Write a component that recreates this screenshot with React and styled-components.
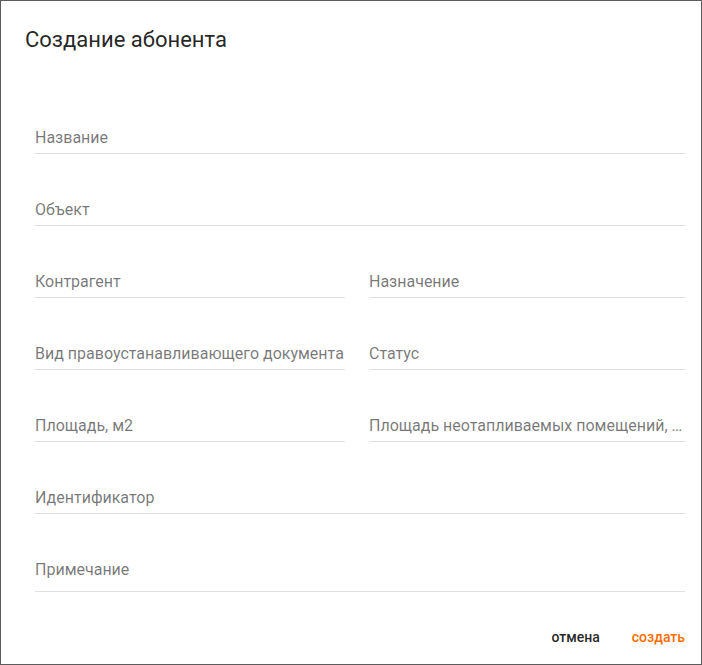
import React from 'react';
import styled, { createGlobalStyle } from 'styled-components';

const GlobalStyle = createGlobalStyle`
  html, body {
    margin: 0;
    padding: 0;
    background: #ffffff;
  }
  body {
    font-family: Roboto, "Noto Sans", Arial, sans-serif;
  }
`;

const Dialog = styled.div`
  box-sizing: border-box;
  width: 702px;
  height: 665px;
  border: 1px solid #5c5c5c;
  background: #ffffff;
  display: flex;
  flex-direction: column;
`;

const Title = styled.h2`
  margin: 0;
  padding: 23px 24px 26px;
  font-size: 22px;
  line-height: 32px;
  font-weight: 400;
  color: rgba(0, 0, 0, 0.87);
`;

const Form = styled.div`
  display: flex;
  flex-direction: column;
  padding: 0 16px 0 34px;
`;

const Row = styled.div`
  display: grid;
  grid-template-columns: 310fr 316fr;
  column-gap: 24px;
`;

const Field = styled.div`
  box-sizing: border-box;
  height: ${(p) => (p.$tall ? 78 : 72)}px;
  min-width: 0;
  display: flex;
  align-items: flex-end;
  padding-bottom: ${(p) => (p.$tall ? 12 : 6)}px;
  border-bottom: 1px solid #e0e0e0;
`;

const Label = styled.label`
  display: block;
  width: 100%;
  font-size: 16px;
  line-height: 19px;
  color: rgba(0, 0, 0, 0.54);
  white-space: nowrap;
  overflow: hidden;
  text-overflow: ellipsis;
`;

const Actions = styled.div`
  display: flex;
  justify-content: flex-end;
  align-items: center;
  gap: 16px;
  padding: 27px 8px 9px;
`;

const ActionButton = styled.button`
  height: 36px;
  padding: 0 8px;
  border: none;
  background: transparent;
  font-family: Roboto, "Noto Sans", Arial, sans-serif;
  font-size: 14px;
  font-weight: 500;
  color: ${(p) => (p.$primary ? '#ff6d00' : 'rgba(0, 0, 0, 0.87)')};
  cursor: pointer;
`;

const TextField = ({ label, tall }) => (
  <Field $tall={tall}>
    <Label>{label}</Label>
  </Field>
);

const App = () => (
  <>
    <GlobalStyle />
    <Dialog>
      <Title>Создание абонента</Title>
      <Form>
        <TextField label="Название" />
        <TextField label="Объект" />
        <Row>
          <TextField label="Контрагент" />
          <TextField label="Назначение" />
        </Row>
        <Row>
          <TextField label="Вид правоустанавливающего документа" />
          <TextField label="Статус" />
        </Row>
        <Row>
          <TextField label="Площадь, м2" />
          <TextField label="Площадь неотапливаемых помещений, м2" />
        </Row>
        <TextField label="Идентификатор" />
        <TextField label="Примечание" tall />
      </Form>
      <Actions>
        <ActionButton>отмена</ActionButton>
        <ActionButton $primary>создать</ActionButton>
      </Actions>
    </Dialog>
  </>
);

export default App;
